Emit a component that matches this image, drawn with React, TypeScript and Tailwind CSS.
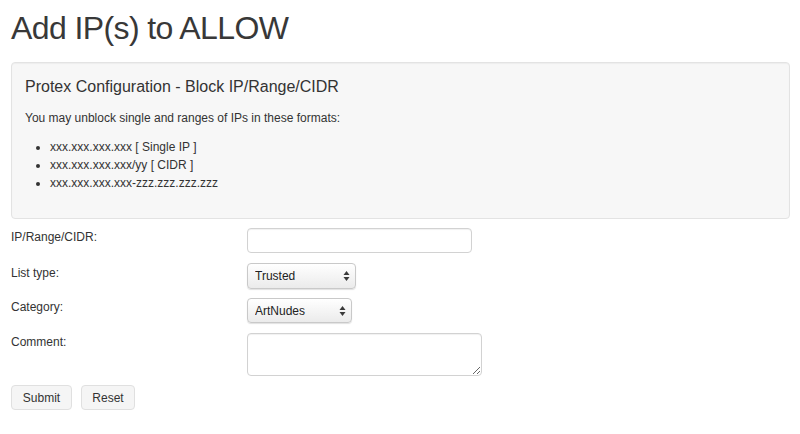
import React from 'react';

const SelectArrows: React.FC = () => (
  <svg width="7" height="11" viewBox="0 0 7 11" className="pointer-events-none absolute right-[6px] top-1/2 -translate-y-1/2">
    <path d="M3.5 0.5 L6.5 4.5 L0.5 4.5 Z" fill="#3a3a3a" />
    <path d="M3.5 10.5 L6.5 6.5 L0.5 6.5 Z" fill="#3a3a3a" />
  </svg>
);

const FakeSelect: React.FC<{ value: string; options: string[]; width: string; height: string }> = ({ value, options, width, height }) => (
  <div className={`relative ${width} ${height}`}>
    <select
      defaultValue={value}
      className="h-full w-full appearance-none rounded-[4px] border border-[#c9c9c9] bg-gradient-to-b from-white to-[#ebebeb] pl-[7px] pr-[18px] text-[12px] text-[#222] shadow-[0_1px_1px_rgba(0,0,0,0.12)] outline-none"
    >
      {options.map(o => (
        <option key={o}>{o}</option>
      ))}
    </select>
    <SelectArrows />
  </div>
);

const App: React.FC = () => {
  return (
    <div className="min-h-screen bg-white px-[11px] pt-[11px] font-['Liberation_Sans',Arial,sans-serif] text-[12px] leading-[18px] text-[#333]">
      <h1 className="text-[32px] font-normal leading-[35px] tracking-[-0.6px] text-[#383838]">Add IP(s) to ALLOW</h1>

      {/* info well */}
      <div className="mt-[16px] w-[779px] rounded-[4px] border border-[#e3e3e3] bg-[#f7f7f7] px-[13px] pb-[26px] pt-[15px] shadow-[inset_0_1px_1px_rgba(0,0,0,0.04)]">
        <h4 className="text-[16px] leading-[18px] text-[#333]">Protex Configuration - Block IP/Range/CIDR</h4>
        <p className="mt-[13px]">You may unblock single and ranges of IPs in these formats:</p>
        <ul className="mt-[11px] list-disc pl-[25px]">
          <li>xxx.xxx.xxx.xxx [ Single IP ]</li>
          <li>xxx.xxx.xxx.xxx/yy [ CIDR ]</li>
          <li>xxx.xxx.xxx.xxx-zzz.zzz.zzz.zzz</li>
        </ul>
      </div>

      {/* form */}
      <form className="mt-[9px]" onSubmit={e => e.preventDefault()}>
        <div className="flex">
          <label className="w-[236px] shrink-0">IP/Range/CIDR:</label>
          <input
            type="text"
            className="h-[25px] w-[225px] rounded-[4px] border border-[#d2d2d2] bg-white px-2 text-[12px] shadow-[inset_0_1px_1px_rgba(0,0,0,0.06)] outline-none"
          />
        </div>
        <div className="mt-[10px] flex">
          <label className="w-[236px] shrink-0 pt-[1px]">List type:</label>
          <FakeSelect value="Trusted" options={['Trusted', 'Untrusted']} width="w-[109px]" height="h-[26px]" />
        </div>
        <div className="mt-[9px] flex">
          <label className="w-[236px] shrink-0">Category:</label>
          <FakeSelect value="ArtNudes" options={['ArtNudes', 'Adult', 'Other']} width="w-[105px]" height="h-[25px]" />
        </div>
        <div className="mt-[10px] flex">
          <label className="w-[236px] shrink-0">Comment:</label>
          <textarea className="h-[43px] w-[235px] rounded-[4px] border border-[#d2d2d2] bg-white px-2 text-[12px] shadow-[inset_0_1px_1px_rgba(0,0,0,0.06)] outline-none" />
        </div>
        <div className="mt-[9px] flex gap-[9px]">
          <button type="submit" className="h-[25px] w-[61px] rounded-[4px] border border-[#e0e0e0] bg-[#f5f5f5] text-[12px] text-[#333]">
            Submit
          </button>
          <button type="reset" className="h-[25px] w-[54px] rounded-[4px] border border-[#e0e0e0] bg-[#f5f5f5] text-[12px] text-[#333]">
            Reset
          </button>
        </div>
      </form>
    </div>
  );
};

export default App;
